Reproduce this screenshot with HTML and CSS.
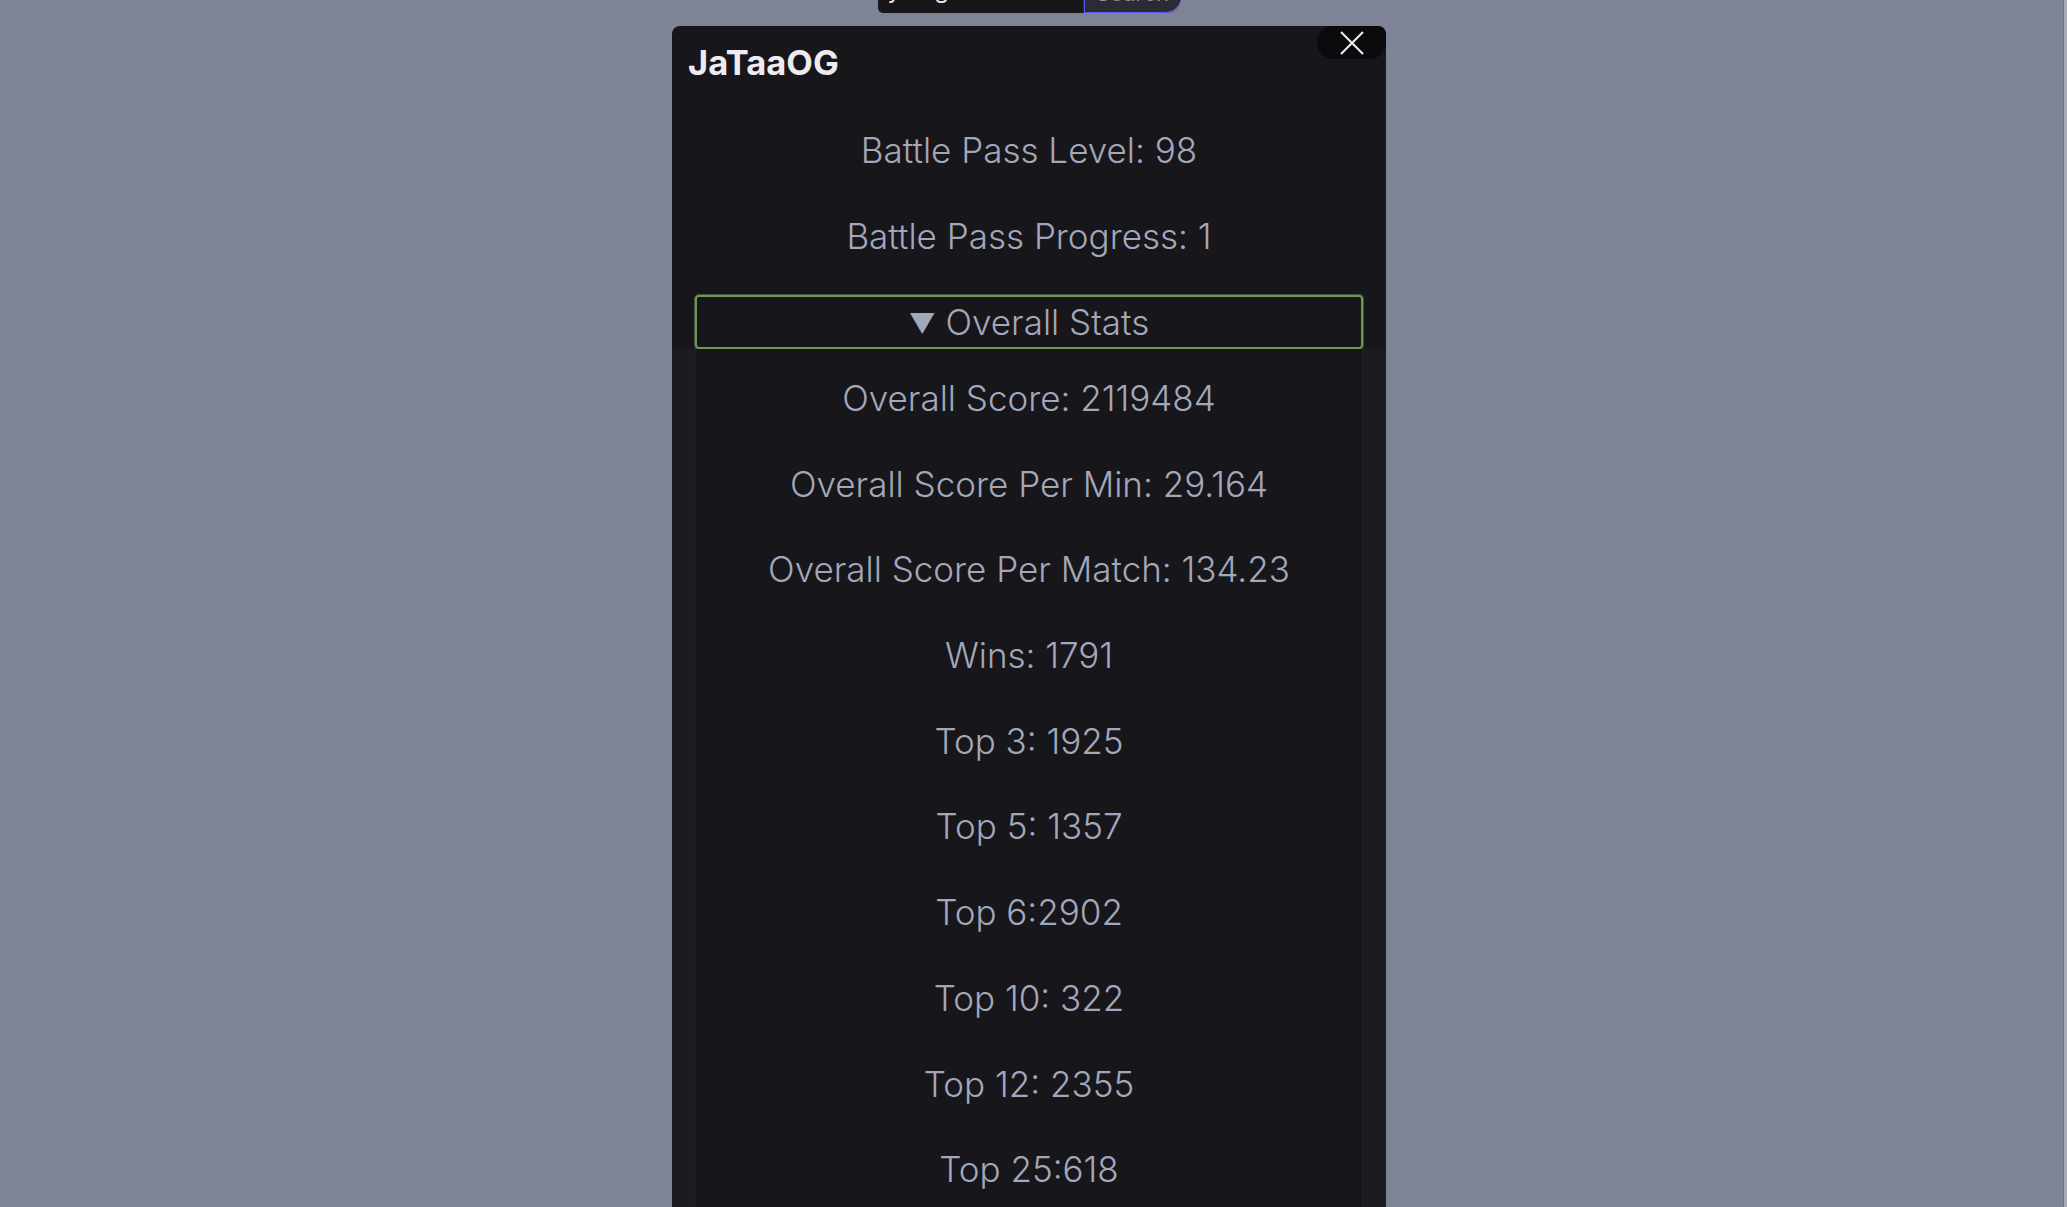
FILE: index.html
```html
<!DOCTYPE html>
<html lang="en">
<head>
<meta charset="utf-8">
<title>JaTaaOG</title>
<link rel="stylesheet" href="styles.css">
</head>
<body>
<div class="page">
  <div class="stage">
    <form class="search">
      <div class="search-input">yking</div>
      <div class="search-btn">Search</div>
    </form>
    <div class="modal">
      <button class="close" type="button" aria-label="Close">
        <svg width="24" height="24" viewBox="0 0 24 24"><path d="M1 1L23 23M23 1L1 23" stroke="#f2f2f5" stroke-width="2" fill="none"/></svg>
      </button>
      <h2 class="title">JaTaaOG</h2>
      <p class="stat first">Battle Pass Level: 98</p>
      <p class="stat">Battle Pass Progress: 1</p>
      <details class="group" open>
        <summary class="group-head"><span class="caret">▼</span> Overall Stats</summary>
        <div class="group-frame">
          <div class="group-body">
            <p class="stat">Overall Score: 2119484</p>
            <p class="stat">Overall Score Per Min: 29.164</p>
            <p class="stat">Overall Score Per Match: 134.23</p>
            <p class="stat">Wins: 1791</p>
            <p class="stat">Top 3: 1925</p>
            <p class="stat">Top 5: 1357</p>
            <p class="stat">Top 6:2902</p>
            <p class="stat">Top 10: 322</p>
            <p class="stat">Top 12: 2355</p>
            <p class="stat">Top 25:618</p>
            <p class="stat">Top 26:0</p>
          </div>
        </div>
      </details>
    </div>
  </div>
  <div class="scrollbar"></div>
</div>
</body>
</html>
```
FILE: styles.css
```css
* { box-sizing: border-box; }
html, body {
  margin: 0;
  height: 100%;
  overflow: hidden;
}
body {
  background: #7e8395;
  font-family: Inter, "Noto Sans", sans-serif;
}
.page {
  display: flex;
  height: 1207px;
  overflow: hidden;
}
.stage {
  flex: 1;
  display: flex;
  flex-direction: column;
  align-items: center;
  padding-right: 5px;
  overflow: hidden;
}
.scrollbar {
  width: 4px;
  background: #a7aab8;
  border-left: 1px solid #6f7486;
}
.search {
  display: flex;
  flex: none;
  margin: -40px 0 0 0;
  height: 53px;
  overflow: hidden;
}
.search-input {
  width: 206px;
  background: #16161b;
  color: #e6e6ea;
  border-radius: 0 0 0 5px;
  font-size: 24px;
  line-height: 24px;
  padding: 18px 0 0 10px;
}
.search-btn {
  width: 97px;
  background: #2a2b33;
  color: #8d90a0;
  border-left: 1px solid #5656ee;
  border-bottom: 1px solid #5656ee;
  box-shadow: 0 1px 2px #5c5ccc;
  border-radius: 0 0 16px 0;
  font-size: 22px;
  line-height: 22px;
  padding-top: 22px;
  text-align: center;
}
.modal {
  position: relative;
  flex: none;
  width: 714px;
  margin-top: 13px;
  background: #16161b;
  border-radius: 8px;
  padding: 16px 16px 24px;
  overflow: hidden;
}
.close {
  position: absolute;
  top: 0;
  right: 0;
  width: 69px;
  height: 33px;
  border: 0;
  padding: 0;
  background: #0b0b0d;
  border-radius: 17px;
  border-top-right-radius: 8px;
  display: flex;
  align-items: center;
  justify-content: center;
}
.close svg { display: block; }
.title {
  margin: 0;
  font-size: 34.5px;
  line-height: 42px;
  font-weight: 700;
  color: #ececf0;
}
.stat {
  margin: 0 0 32px;
  text-align: center;
  font-size: 35px;
  font-weight: 300;
  line-height: 54px;
  color: #a4a7b9;
}
.stat.first { margin-top: 39px; }
.group {
  margin: 0 7px;
}
.group-head {
  list-style: none;
  display: block;
  border: 2px solid #6a9b48;
  box-shadow: 0 0 0 1px rgba(225, 240, 215, 0.25);
  border-radius: 4px;
  height: 54px;
  line-height: 50px;
  text-align: center;
  font-size: 35px;
  font-weight: 300;
  color: #a4a7b9;
  cursor: pointer;
}
.caret {
  font-size: 27px;
  vertical-align: 2px;
}
.group-head::-webkit-details-marker { display: none; }
.group-frame {
  margin: 0 -23px;
  padding: 0 23px;
  background: #1b1b20;
}
.group-body {
  background: #16161b;
  padding-top: 22px;
  border-left: 1px solid #1f1f25;
  border-right: 1px solid #1f1f25;
}
.group-body .stat { margin-bottom: 31.7px; }
```
